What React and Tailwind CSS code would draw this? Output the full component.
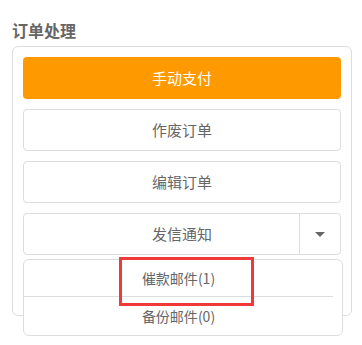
import { useState } from "react";

const actions = ["作废订单", "编辑订单"];
const mailItems = [
    { label: "催款邮件", count: 1 },
    { label: "备份邮件", count: 0 }
];

const OrderPanel = () => {
    const [open] = useState(true);

    return (
        <div
            className="w-[362px] h-[345px] bg-white pl-[12px] pt-[20px]"
            style={{ fontFamily: '"Noto Sans CJK SC", "Noto Sans", sans-serif' }}
        >
            <h2 className="text-[16px] leading-[20px] font-semibold text-[#666] mb-[6px]">
                订单处理
            </h2>

            <div className="w-[340px] border border-[#ddd] rounded-[6px] p-[10px] pb-[60px] flex flex-col gap-[10px]">
                <button className="h-[42px] w-full rounded-[4px] bg-[#ff9900] text-white text-[15px]">
                    手动支付
                </button>

                {actions.map(action => (
                    <button
                        key={action}
                        className="h-[42px] w-full rounded-[4px] border border-[#ddd] bg-white text-[#666] text-[15px]"
                    >
                        {action}
                    </button>
                ))}

                <div className="relative">
                    <div className="h-[42px] w-full rounded-[4px] border border-[#ddd] bg-white flex items-stretch text-[#666] text-[15px]">
                        <span className="w-[41px]" />
                        <span className="flex-1 flex items-center justify-center">
                            发信通知
                        </span>
                        <span className="w-[41px] border-l border-[#ddd] flex items-center justify-center">
                            <span className="w-0 h-0 border-l-[5px] border-r-[5px] border-t-[5px] border-l-transparent border-r-transparent border-t-[#666] ml-[-1px]" />
                        </span>
                    </div>

                    {open && (
                        <div className="absolute left-0 top-[46px] w-[320px] border border-[#ddd] rounded-[6px] bg-white z-10 overflow-hidden">
                            {mailItems.map((item, i) => (
                                <div
                                    key={item.label}
                                    className={
                                        i === 0
                                            ? "w-[309px] h-[37px] flex items-center justify-center border-b border-[#ddd] text-[14px] text-[#666]"
                                            : "w-[309px] h-[38px] flex items-center justify-center text-[14px] text-[#666]"
                                    }
                                >
                                    {item.label}({item.count})
                                </div>
                            ))}
                        </div>
                    )}

                    <div className="absolute left-[96px] top-[44px] w-[135px] h-[49px] border-[3px] border-[#f03a3a] z-20 pointer-events-none" />
                </div>
            </div>
        </div>
    );
};

export default function App() {
    return <OrderPanel />;
}
